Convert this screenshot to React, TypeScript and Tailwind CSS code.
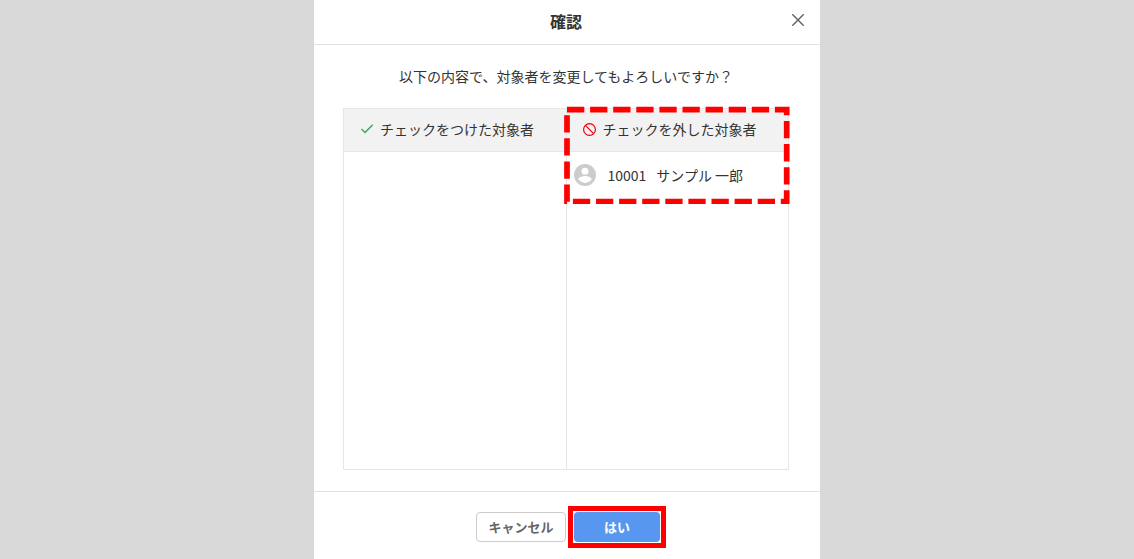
import React from "react";

interface Member {
  code: string;
  name: string;
}

interface MemberColumnProps {
  title: string;
  icon: React.ReactNode;
  members: Member[];
}

const checkedMembers: Member[] = [];
const uncheckedMembers: Member[] = [{ code: "10001", name: "サンプル 一郎" }];

const CloseIcon = () => (
  <svg className="h-3 w-3" viewBox="0 0 12 12" fill="none" stroke="#666666" strokeWidth="1.5" aria-hidden="true">
    <path d="M0.3 0.3 11.7 11.7M11.7 0.3 0.3 11.7" />
  </svg>
);

const CheckIcon = () => (
  <svg className="h-3 w-3" viewBox="0 0 12 12" fill="none" stroke="#3fa35a" strokeWidth="1.4" aria-hidden="true">
    <path d="M0.4 6 4 9.6 11.7 1.8" />
  </svg>
);

const BanIcon = () => (
  <svg className="h-[13px] w-[13px]" viewBox="0 0 13 13" fill="none" stroke="#e60012" strokeWidth="1.2" aria-hidden="true">
    <circle cx="6.5" cy="6.5" r="5.9" />
    <path d="M2.4 2.4 10.6 10.6" />
  </svg>
);

const AvatarIcon = () => (
  <svg className="h-[22px] w-[22px]" viewBox="0 0 22 22" aria-hidden="true">
    <circle cx="11" cy="11" r="11" fill="#cccccc" />
    <circle cx="11" cy="7.2" r="3.5" fill="#ffffff" />
    <path d="M4.2 15.1C4.9 12.9 8.7 12 11 12s6.1.9 6.8 3.1C16.3 17.4 13.9 18.9 11 18.9S5.7 17.4 4.2 15.1Z" fill="#ffffff" />
  </svg>
);

const MemberColumn: React.FC<MemberColumnProps> = ({ title, icon, members }) => {
  return (
    <section className="flex flex-1 flex-col">
      <h2 className="flex h-[43px] items-center gap-1.5 border-b border-[#e6e6e6] bg-[#f2f2f2] px-4 pb-0.5 text-sm">
        <span className="flex w-3.5 justify-center">{icon}</span>
        {title}
      </h2>
      <ul className="min-h-[317px] flex-1">
        {members.map((member) => (
          <li key={member.code} className="flex h-[46px] items-center px-[7px] text-sm">
            <AvatarIcon />
            <span className="ml-3">{member.code}</span>
            <span className="ml-2.5">{member.name}</span>
          </li>
        ))}
      </ul>
    </section>
  );
};

const App: React.FC = () => {
  return (
    <div className="min-h-screen bg-[#d9d9d9] font-['Noto_Sans_CJK_JP',sans-serif] text-[#333333]">
      <div
        role="dialog"
        aria-labelledby="dialog-title"
        className="mx-auto flex min-h-screen w-full max-w-[506px] flex-col bg-white"
      >
        <header className="relative flex h-[45px] items-center justify-center border-b border-[#e2e2e2] pr-0.5 pb-0.5">
          <h1 id="dialog-title" className="text-base font-bold">
            確認
          </h1>
          <button type="button" aria-label="閉じる" className="absolute top-2.5 right-3 p-1">
            <CloseIcon />
          </button>
        </header>

        <main className="flex flex-1 flex-col pt-[19px] pr-[31px] pb-[21px] pl-[29px]">
          <p className="mb-5 text-center text-sm leading-6">
            以下の内容で、対象者を変更してもよろしいですか？
          </p>
          <div className="relative flex flex-1 flex-col">
            <div className="flex flex-1 divide-x divide-[#e6e6e6] border border-[#e6e6e6]">
              <MemberColumn title="チェックをつけた対象者" icon={<CheckIcon />} members={checkedMembers} />
              <MemberColumn title="チェックを外した対象者" icon={<BanIcon />} members={uncheckedMembers} />
            </div>
            {/* 強調用の破線枠 */}
            <svg
              className="pointer-events-none absolute -top-1 -right-0.5 h-[100px] w-[228px]"
              viewBox="0 0 228 100"
              fill="none"
              aria-hidden="true"
            >
              <rect x="4" y="5.7" width="219.7" height="92" stroke="#ff0000" strokeWidth="5.7" strokeDasharray="17.3 5.8" />
            </svg>
          </div>
        </main>

        <footer className="flex h-[69px] items-start justify-center gap-2 border-t border-[#e2e2e2] pt-5 pl-0.5">
          <button
            type="button"
            className="h-[30px] w-[90px] rounded border border-[#cccccc] bg-white text-[13px] font-bold text-[#666666]"
          >
            キャンセル
          </button>
          <div className="relative">
            <button type="button" className="block h-[30px] w-[86px] rounded bg-[#5897f0] text-[13px] font-bold text-white">
              はい
            </button>
            <span className="pointer-events-none absolute -inset-1.5 border-[5px] border-[#ff0000]" />
          </div>
        </footer>
      </div>
    </div>
  );
};

export default App;
